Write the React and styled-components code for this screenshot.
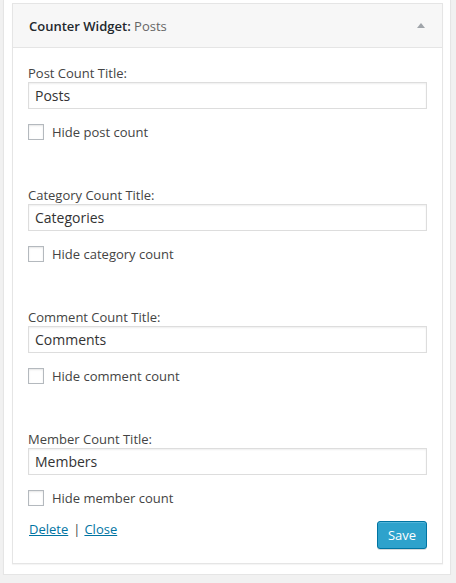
import React from "react";
import styled, { createGlobalStyle } from "styled-components";

const Global = createGlobalStyle`
  html, body { margin: 0; padding: 0; background: #f1f1f1; }
  body { font-family: "Open Sans", "Liberation Sans", sans-serif; font-size: 13px; color: #444; }
  * { box-sizing: border-box; }
`;

const Panel = styled.div`
  margin-left: 3px;
  width: 448px;
  background: #fff;
  border: 1px solid #e5e5e5;
  border-top: none;
  box-shadow: 0 1px 1px rgba(0,0,0,0.04);
  padding: 3px 7px 10px 8px;
`;

const Widget = styled.div`
  border: 1px solid #e5e5e5;
  background: #fff;
  box-shadow: 0 1px 1px rgba(0,0,0,0.04);
`;

const Top = styled.div`
  height: 44px;
  background: #f7f7f7;
  border-bottom: 1px solid #e5e5e5;
  display: flex;
  align-items: center;
  justify-content: space-between;
  padding: 0 16px 0 16px;
`;

const Title = styled.h3`
  margin: 0;
  font-size: 13px;
  font-weight: 600;
  color: #23282d;
  line-height: 18px;
  span { font-weight: 400; color: #666; }
`;

const Arrow = styled.span`
  width: 0;
  height: 0;
  border-left: 4px solid transparent;
  border-right: 4px solid transparent;
  border-bottom: 5px solid #a0a5aa;
  margin-right: 1px;
`;

const Inside = styled.div`
  padding: 16px 15px 14px 15px;
  display: flex;
  flex-direction: column;
`;

const Section = styled.div`
  display: flex;
  flex-direction: column;
  margin-bottom: ${(p) => (p.$last ? "15px" : "46px")};
`;

const Label = styled.label`
  line-height: 18px;
  font-size: 13px;
  color: #444;
`;

const Input = styled.input`
  height: 27px;
  width: 100%;
  border: 1px solid #ddd;
  box-shadow: inset 0 1px 2px rgba(0,0,0,0.07);
  background: #fff;
  color: #333;
  font-family: "Open Sans", "Liberation Sans", sans-serif;
  font-size: 14px;
  padding: 0 6px;
  margin: 0 0 15px 0;
  outline: none;
`;

const CheckRow = styled.label`
  display: flex;
  align-items: center;
  gap: 8px;
  height: 16px;
  line-height: 18px;
  color: #444;
`;

const Box = styled.span`
  width: 16px;
  height: 16px;
  border: 1px solid #b4b9be;
  background: #fff;
  box-shadow: inset 0 1px 2px rgba(0,0,0,0.1);
  flex: none;
`;

const Actions = styled.div`
  display: flex;
  justify-content: space-between;
  align-items: flex-start;
`;

const Links = styled.div`
  line-height: 18px;
  margin-top: -1px;
  padding-left: 1px;
  color: #444;
  a { color: #0074a2; text-decoration: underline; }
  span { margin: 0 4px 0 5px; }
`;

const SaveButton = styled.button`
  width: 50px;
  height: 28px;
  background: #2ea2cc;
  border: 1px solid #0074a2;
  border-radius: 3px;
  box-shadow: inset 0 1px 0 rgba(120,200,230,0.5), 0 1px 0 rgba(0,0,0,0.15);
  color: #fff;
  font-family: "Open Sans", "Liberation Sans", sans-serif;
  font-size: 13px;
  padding: 0 0 1px;
`;

const fields = [
  { label: "Post Count Title:", value: "Posts", check: "Hide post count" },
  { label: "Category Count Title:", value: "Categories", check: "Hide category count" },
  { label: "Comment Count Title:", value: "Comments", check: "Hide comment count" },
  { label: "Member Count Title:", value: "Members", check: "Hide member count" },
];

export default function App() {
  return (
    <>
      <Global />
      <Panel>
        <Widget>
          <Top>
            <Title>Counter Widget: <span>Posts</span></Title>
            <Arrow />
          </Top>
          <Inside>
            {fields.map((f, i) => (
              <Section key={f.label} $last={i === fields.length - 1}>
                <Label>{f.label}</Label>
                <Input defaultValue={f.value} />
                <CheckRow>
                  <Box />
                  {f.check}
                </CheckRow>
              </Section>
            ))}
            <Actions>
              <Links>
                <a href="#">Delete</a><span>|</span><a href="#">Close</a>
              </Links>
              <SaveButton>Save</SaveButton>
            </Actions>
          </Inside>
        </Widget>
      </Panel>
    </>
  );
}
